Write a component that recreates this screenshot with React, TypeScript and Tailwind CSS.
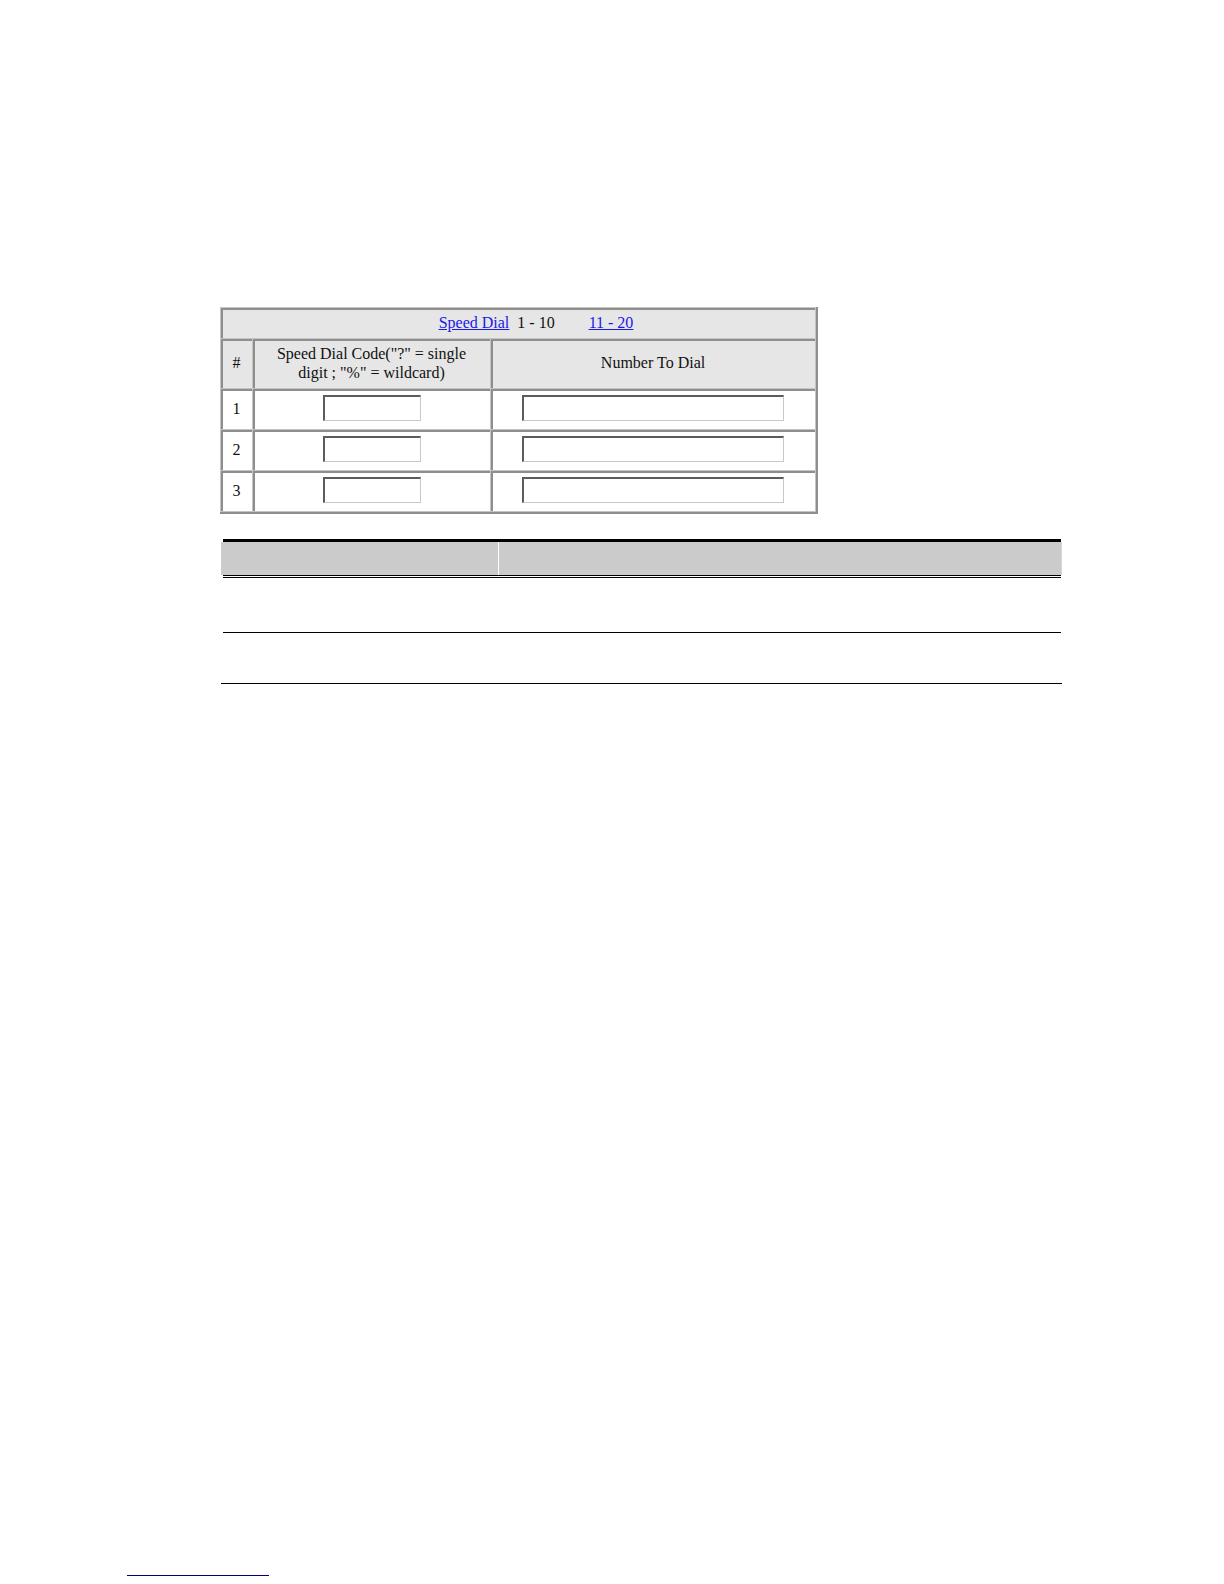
import React from "react";

const rows = [1, 2, 3];

const headCell = "border-t-2 border-l-2 border-t-[#8e8e8c] border-l-[#8e8e8c] bg-[#e6e6e6] p-0 pb-1 pr-0.5 font-normal";
const bodyCell = "border-t-2 border-l-2 border-t-[#8e8e8c] border-l-[#8e8e8c] bg-white p-0 pr-0.5 h-[40px] text-center align-middle";
const field =
  "block mx-auto h-[26px] border-t-2 border-l-2 border-r border-b border-t-[#5c5c5c] border-l-[#5c5c5c] border-r-[#c8c8c8] border-b-[#c8c8c8] bg-white px-1 outline-none";

const SpeedDialTable = () => (
  <table className="w-full table-fixed border-separate border-spacing-px border-r-2 border-b-2 border-[#8e8e8c] bg-[#c4c4c0] text-base leading-[19px] text-[#111]">
    <colgroup>
      <col className="w-[31px]" />
      <col className="w-[237px]" />
      <col />
    </colgroup>
    <thead>
      <tr>
        <th colSpan={3} className={`${headCell} h-[30px] pl-9`}>
          <a href="#speed-dial" className="text-[#1a1ae6] underline">Speed Dial</a>
          <span className="ml-2">1 - 10</span>
          <a href="#page-2" className="ml-[34px] text-[#1a1ae6] underline">11 - 20</a>
        </th>
      </tr>
      <tr>
        <th scope="col" className={`${headCell} h-[49px]`}>#</th>
        <th scope="col" className={headCell}>
          Speed Dial Code("?" = single
          <br />
          digit ; "%" = wildcard)
        </th>
        <th scope="col" className={headCell}>Number To Dial</th>
      </tr>
    </thead>
    <tbody>
      {rows.map((n) => (
        <tr key={n}>
          <td className={`${bodyCell} pb-1`}>{n}</td>
          <td className={`${bodyCell} pb-1`}>
            <input type="text" aria-label={`Speed dial code ${n}`} className={`${field} w-[98px]`} />
          </td>
          <td className={`${bodyCell} pb-1`}>
            <input type="text" aria-label={`Number to dial ${n}`} className={`${field} w-[262px]`} />
          </td>
        </tr>
      ))}
    </tbody>
  </table>
);

const DescriptionTable = () => (
  <div className="border-b border-black pr-px pl-0.5">
    <table className="w-full table-fixed border-separate border-spacing-0">
      <colgroup>
        <col className="w-[276px]" />
        <col />
      </colgroup>
      <thead>
        <tr>
          <th className="border-t-3 border-b-3 border-black p-0 [border-bottom-style:double]">
            <div className="mr-px h-[33px] bg-[#cbcbcb] shadow-[-2px_0_#cbcbcb]"></div>
          </th>
          <th className="border-t-3 border-b-3 border-black p-0 [border-bottom-style:double]">
            <div className="h-[33px] bg-[#cbcbcb] shadow-[1px_0_#d8d8d8]"></div>
          </th>
        </tr>
      </thead>
      <tbody>
        <tr>
          <td className="h-[55px] border-b border-black p-0"></td>
          <td className="border-b border-black p-0"></td>
        </tr>
        <tr>
          <td className="h-[50px] p-0"></td>
          <td className="p-0"></td>
        </tr>
      </tbody>
    </table>
  </div>
);

export default function App() {
  return (
    <div className="flex min-h-screen flex-col bg-white font-['Liberation_Serif',serif]">
      <main className="flex-1 pt-[307px] pr-[162px] pl-[220px]">
        <div className="w-full max-w-[598px]">
          <SpeedDialTable />
        </div>
        <div className="mt-[25px] pl-px">
          <DescriptionTable />
        </div>
      </main>
      <footer className="px-[127px] pb-2">
        <div className="w-[142px] border-b border-[#00007b]"></div>
      </footer>
    </div>
  );
}
